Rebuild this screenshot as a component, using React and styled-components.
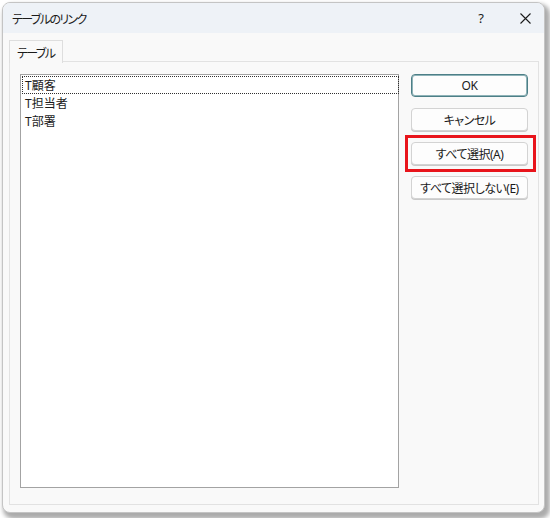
import React from "react";
import styled, { createGlobalStyle } from "styled-components";

const Global = createGlobalStyle`
  html, body {
    margin: 0;
    padding: 0;
    background: #ffffff;
  }
  body {
    width: 550px;
    height: 518px;
    overflow: hidden;
    font-family: "Noto Sans", "Noto Sans CJK JP", sans-serif;
    font-feature-settings: "palt";
    color: #1b1b1b;
  }
`;

const Window = styled.div`
  box-sizing: border-box;
  margin: 2px 0 0 2px;
  width: 543px;
  height: 511px;
  display: flex;
  flex-direction: column;
  background: #f9f9f9;
  border: 1px solid #c4c4c4;
  border-radius: 8px;
  overflow: hidden;
  box-shadow: 3px 4px 4px 2px rgba(0, 0, 0, 0.33);
`;

const TitleBar = styled.div`
  height: 30px;
  flex: none;
  display: flex;
  align-items: center;
  padding-left: 9px;
  background: #eef2f7;
  font-size: 12px;
`;

const Title = styled.span`
  flex: 1;
  font-family: "Noto Sans CJK JP", sans-serif;
  font-feature-settings: "palt";
  letter-spacing: -1.6px;
`;

const CaptionButton = styled.div`
  width: ${(p) => p.$w}px;
  height: 30px;
  display: flex;
  align-items: center;
  justify-content: center;
  font-size: 13px;
  color: #1b1b1b;
`;

const Body = styled.div`
  flex: 1;
  display: flex;
  flex-direction: column;
  padding: 7px 5px 7px 6px;
  min-height: 0;
`;

const TabStrip = styled.div`
  display: flex;
  height: 22px;
  flex: none;
  position: relative;
  z-index: 1;
  margin-bottom: -1px;
`;

const Tab = styled.div`
  box-sizing: border-box;
  width: 54px;
  height: 23px;
  border: 1px solid #dedede;
  border-bottom: none;
  background: #f9f9f9;
  font-family: "Noto Sans CJK JP", sans-serif;
  font-feature-settings: "palt";
  letter-spacing: -1.6px;
  font-size: 12px;
  padding: 3px 0 0 7px;
`;

const Panel = styled.div`
  flex: 1;
  display: flex;
  gap: 12px;
  border: 1px solid #e2e2e2;
  padding: 12px 8px 13px 10px;
  min-height: 0;
  background: #f9f9f9;
`;

const ListBox = styled.div`
  box-sizing: border-box;
  width: 379px;
  height: 414px;
  flex: none;
  background: #ffffff;
  border: 1px solid #a3a3a3;
  padding: 1px 0 0 1px;
  display: flex;
  flex-direction: column;
`;

const ListItem = styled.div`
  box-sizing: border-box;
  width: 377px;
  height: 18px;
  line-height: 16px;
  padding: 1px 0 0 2px;
  font-size: 12px;
  font-family: "Noto Sans", "Noto Sans CJK JP", sans-serif;
  border: 1px ${(p) => (p.$focused ? "dotted #303030" : "solid transparent")};
`;

const ButtonColumn = styled.div`
  display: flex;
  flex-direction: column;
  gap: 11px;
  width: 117px;
`;

const ButtonSlot = styled.div`
  position: relative;
`;

const Button = styled.div`
  box-sizing: border-box;
  height: 23px;
  display: flex;
  align-items: center;
  justify-content: center;
  background: #fdfdfd;
  border: 1px solid ${(p) => (p.$primary ? "#4d7f87" : "#d3d3d3")};
  box-shadow: ${(p) =>
    p.$primary ? "inset 0 0 0 1px #8fb3b8" : "0 1px 0 #c9c9c9"};
  border-radius: 4px;
  font-size: 12px;
  font-family: "Noto Sans", "Noto Sans CJK JP", sans-serif;
  font-feature-settings: "palt";
  letter-spacing: -0.5px;
`;

const Highlight = styled.span`
  position: absolute;
  top: -7px;
  bottom: -7px;
  left: -6px;
  right: -8px;
  border: 3px solid #e8141b;
  pointer-events: none;
`;

const CloseIcon = () => (
  <svg width="11" height="11" viewBox="0 0 11 11">
    <path d="M0.5 0.5 L10.5 10.5 M10.5 0.5 L0.5 10.5" stroke="#1b1b1b" strokeWidth="1.1" />
  </svg>
);

const tables = ["T顧客", "T担当者", "T部署"];

const buttons = [
  { label: "OK", primary: true },
  { label: "キャンセル" },
  { label: "すべて選択(A)", marked: true },
  { label: "すべて選択しない(E)" },
];

export default function App() {
  return (
    <>
      <Global />
      <Window>
        <TitleBar>
          <Title>テーブルのリンク</Title>
          <CaptionButton $w={50}>?</CaptionButton>
          <CaptionButton $w={38}>
            <CloseIcon />
          </CaptionButton>
        </TitleBar>
        <Body>
          <TabStrip>
            <Tab>テーブル</Tab>
          </TabStrip>
          <Panel>
            <ListBox>
              {tables.map((t, i) => (
                <ListItem key={t} $focused={i === 0}>
                  {t}
                </ListItem>
              ))}
            </ListBox>
            <ButtonColumn>
              {buttons.map((b) => (
                <ButtonSlot key={b.label}>
                  <Button $primary={b.primary}>{b.label}</Button>
                  {b.marked && <Highlight />}
                </ButtonSlot>
              ))}
            </ButtonColumn>
          </Panel>
        </Body>
      </Window>
    </>
  );
}
